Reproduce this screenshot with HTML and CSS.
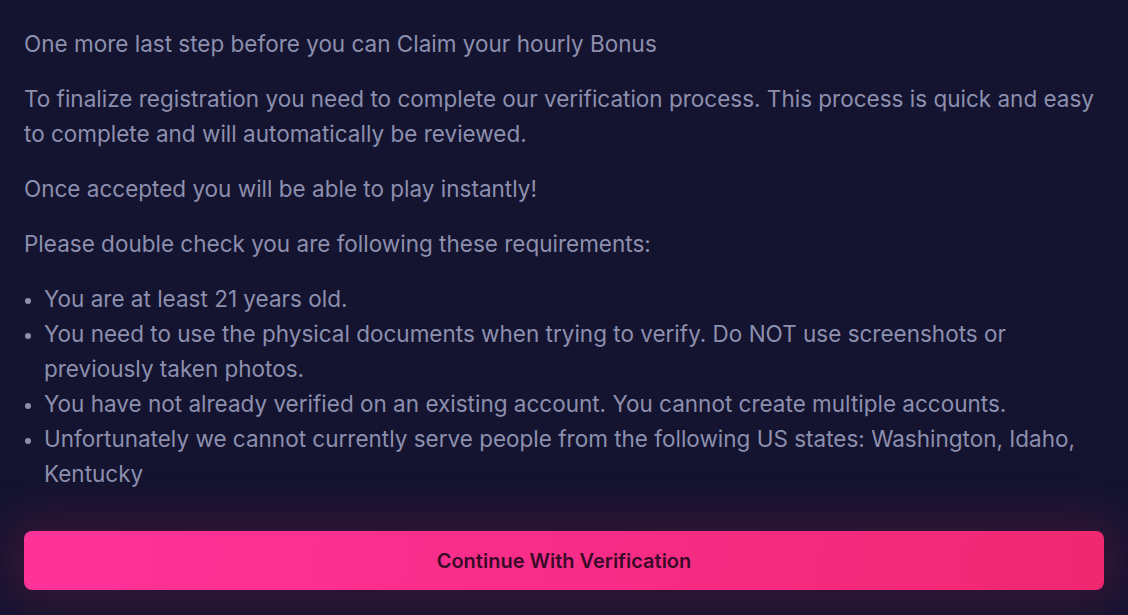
FILE: index.html
```html
<!DOCTYPE html>
<html lang="en">
<head>
<meta charset="utf-8">
<link rel="stylesheet" href="styles.css">
</head>
<body>
<main class="panel">
  <p class="text">One more last step before you can Claim your hourly Bonus</p>
  <p class="text">To finalize registration you need to complete our verification process. This process is quick and easy to complete and will automatically be reviewed.</p>
  <p class="text">Once accepted you will be able to play instantly!</p>
  <p class="text">Please double check you are following these requirements:</p>
  <ul class="reqs">
    <li>You are at least 21 years old.</li>
    <li>You need to use the physical documents when trying to verify. Do NOT use screenshots or previously taken photos.</li>
    <li>You have not already verified on an existing account. You cannot create multiple accounts.</li>
    <li>Unfortunately we cannot currently serve people from the following US states: Washington, Idaho, Kentucky</li>
  </ul>
  <button class="cta">Continue With Verification</button>
</main>
</body>
</html>
```
FILE: styles.css
```css
html, body {
  margin: 0;
  padding: 0;
  background: #141430;
  height: 100%;
  overflow: hidden;
}
.panel {
  font-family: Inter, "Noto Sans", sans-serif;
  color: #8d8fae;
  font-size: 22.5px;
  line-height: 35px;
  padding: 26px 24px 0 24px;
  display: flex;
  flex-direction: column;
}
.text {
  margin: 0 0 20px 0;
}
.reqs {
  margin: 0 0 40px 0;
  padding-left: 20px;
}
.reqs li {
  margin: 0;
}
.reqs li::marker {
  font-size: 19px;
}
.cta {
  height: 59px;
  border: none;
  border-radius: 8px;
  background: linear-gradient(100deg, #fe3399 0%, #f72c86 55%, #ef2870 100%);
  color: #3a0b28;
  font-family: Inter, "Noto Sans", sans-serif;
  font-size: 20px;
  font-weight: 600;
  box-shadow: 0 0 40px 14px rgba(120, 20, 70, 0.35);
  cursor: pointer;
}
```
